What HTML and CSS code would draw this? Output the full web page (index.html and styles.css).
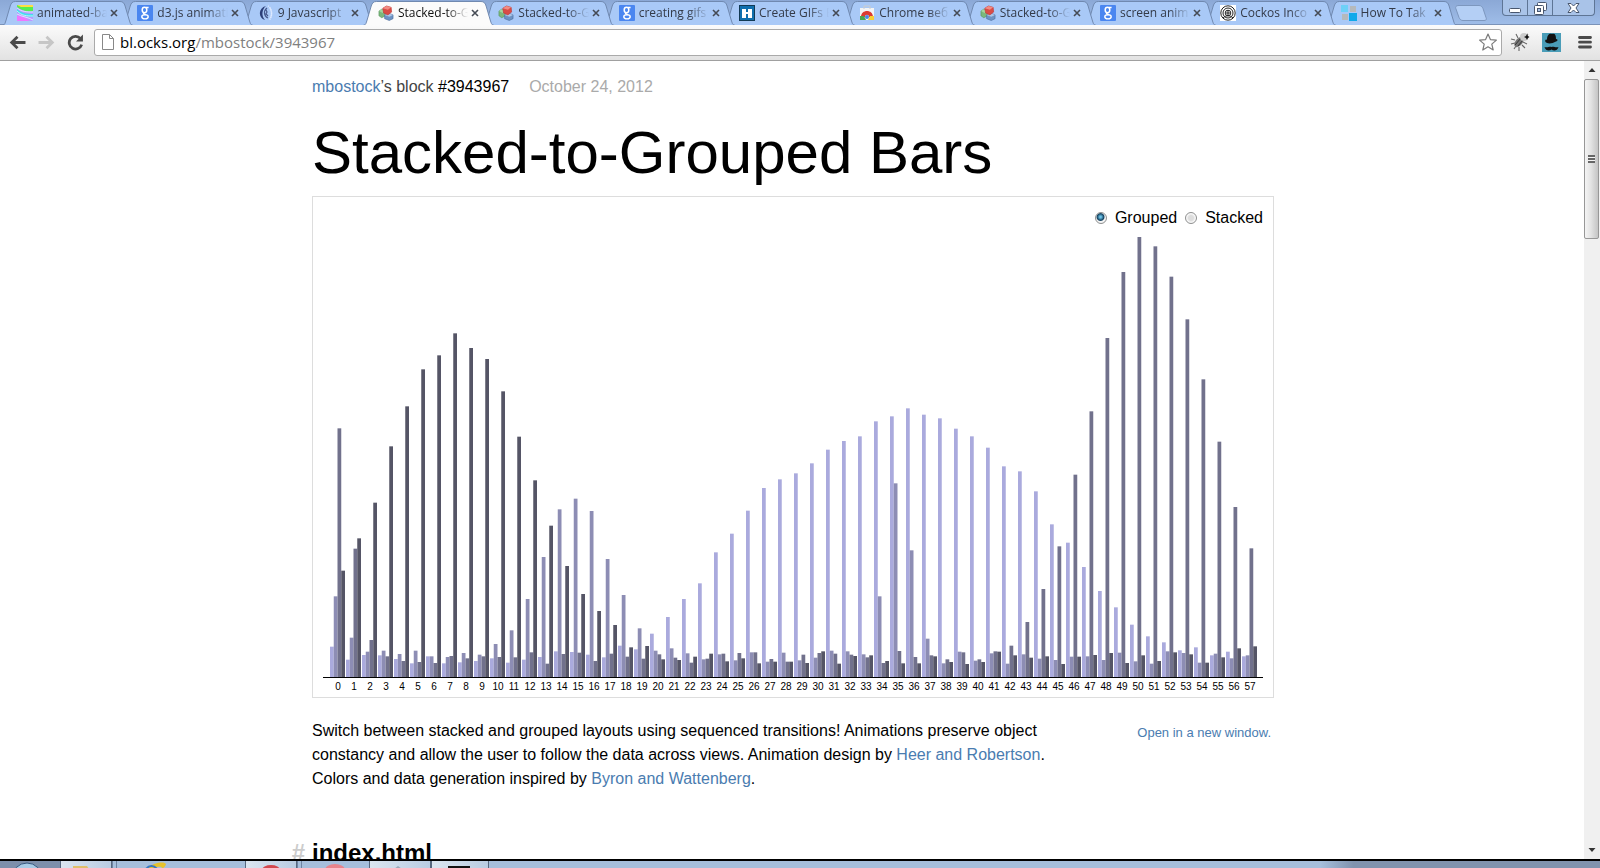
FILE: index.html
```html
<!DOCTYPE html>
<html lang="en">
<head>
<meta charset="utf-8">
<title>Stacked-to-Grouped Bars</title>
<link rel="stylesheet" href="styles.css">
</head>
<body>
<svg class="defs" aria-hidden="true">
  <symbol id="shape" viewBox="0 0 128 24" preserveAspectRatio="none">
    <path d="M0 24.5C3 24 3 22 4 19L8 5C9 2 10 .5 13 .5H115C118 .5 119 2 120 5L124 19C125 22 125 24 128 24.5" vector-effect="non-scaling-stroke"/>
  </symbol>
  <symbol id="rainbow" viewBox="0 0 16 16">
    <path fill="#b9f" d="M0 0h16v16H0z"/><path fill="#5e5" d="M0 0h16v6C9 7 4 5 0 2z"/><path fill="#fd4" d="M0 0h16v2H4z"/><path fill="#4de" d="M0 4c4 4 9 5 16 5v3C8 12 3 9 0 7z"/><path fill="#e7f" d="M0 11c6 0 9 2 12 5H0z"/><path fill="none" stroke="#eff" stroke-width=".7" d="M0 3c5 4 10 4 16 4M0 6c5 5 10 5 16 5M0 9c5 3 11 3 16 6"/>
  </symbol>
  <symbol id="google" viewBox="0 0 16 16">
    <rect width="16" height="16" rx="1" fill="#4a86f0"/><g fill="none" stroke="#fff"><ellipse cx="7.5" cy="5" rx="2.3" ry="2.7" stroke-width="1.5"/><ellipse cx="8" cy="11.8" rx="3.2" ry="2.1" stroke-width="1.4"/><path stroke-width="1.3" d="M9 2.5h2.6M7 7.4c-1.4 1 0 1.400 1.500 2"/></g>
  </symbol>
  <symbol id="swirl" viewBox="0 0 16 16">
    <path fill="#2c3f78" d="M8 1C0 3 0 13 7 15 3 11 4 4 8 1z"/><path fill="none" stroke="#46588c" stroke-width="1.200" d="M9 3C5 6 6 11 10 13M8 5l1 2-1 2 2 2"/><path fill="none" stroke="#dfeaff" stroke-width="1.500" stroke-dasharray="1 1" d="M10 1c4 2 5 11 1 14M12 3c2 3 2 8 0 10"/>
  </symbol>
  <symbol id="cubes" viewBox="0 0 17 16">
    <path fill="#7cb87c" stroke="#4f8f56" stroke-width=".6" d="M1 6l3-2 4 2v5l-4 2-3-2z"/><path fill="#a5d6a0" d="M1 6l3-2 4 2-3 2z"/><path fill="#6d93c4" stroke="#49699a" stroke-width=".6" d="M7 10l4-2 5 2v4l-4 2-5-2z"/><path fill="#abc6e6" d="M7 10l4-2 5 2-4 2z"/><path fill="#d94c46" stroke="#b33" stroke-width=".6" d="M5 3l4-2.500L14 2l.5 5-4 3L6 8z"/><path fill="#f18c83" d="M5 3l4-2.500L14 2l-3.500 2.500z"/>
  </symbol>
  <symbol id="letterh" viewBox="0 0 16 16">
    <path fill="#123a55" d="M0 0h16v16H0z"/><path fill="#0f6fae" d="M1 1h14v14H1z"/><path fill="#fff" d="M3 4h4v3h2V4h4v9H9V9H7v4H3z"/>
  </symbol>
  <symbol id="store" viewBox="0 0 16 16">
    <path fill="#f4f4f4" d="M1 3h14v12H1z"/><path fill="none" stroke="#ccc" d="M5 4V1h6v3"/><path fill="#dc3b32" d="M2 12c0-8 12-8 12 0h-4c0-3-4-3-4 0z"/><path fill="#4aa551" d="M1 11h4l2 4H1z"/><path fill="#f7cf36" d="M11 11h4v4H9z"/><circle cx="8" cy="12" r="2" fill="#4886e8"/>
  </symbol>
  <symbol id="rings" viewBox="0 0 16 16">
    <path fill="#fff" d="M0 0h16v16H0z"/><g fill="none" stroke="#222"><circle cx="8" cy="8" r="7.200"/><circle cx="8" cy="8" r="5"/><circle cx="8" cy="8" r="2.800"/><path d="M8 5v6M6 8h4M3 13c3-3 7-3 10 0"/></g>
  </symbol>
  <symbol id="panes" viewBox="0 0 16 16">
    <path fill="#6dd0f7" d="M0 0h7v7H0z"/><path fill="#b5b9bc" d="M9 1h6v6H9zM1 9h6v6H1z"/><path fill="#10a9ea" d="M8 8h8v8H8z"/>
  </symbol>
  <symbol id="close" viewBox="0 0 12 12"><path d="M3 3l6 6M9 3l-6 6" fill="none" stroke="#454b55" stroke-width="1.600"/></symbol>
</svg>

<header class="browser">
  <div class="tabbar">
    <div class="tabs" id="tabs"></div>
    <button class="newtab" aria-label="New tab"><svg viewBox="0 0 32 16"><path d="M4 .5H24c2 0 3 1 4 3l3 9c1 2 0 3-2 3H8c-2 0-3-1-4-3L1 4C0 2 1 .5 4 .5z" fill="#b4cff5" stroke="#7d97be"/></svg></button>
    <div class="wincontrols">
      <button aria-label="Minimize"><svg viewBox="0 0 24 16"><rect x="6.500" y="8.500" width="11" height="4" rx="1" fill="#fff" stroke="#48566e"/></svg></button>
      <button aria-label="Restore"><svg viewBox="0 0 24 16"><g fill="#fff" stroke="#48566e"><rect x="9.500" y="2.500" width="9" height="8" rx="1"/><rect x="6.500" y="5.500" width="9" height="9" rx="1"/><rect x="9.500" y="8.500" width="3" height="3" fill="#a9c2e6"/></g></svg></button>
      <button class="wide" aria-label="Close window"><svg viewBox="0 0 40 16"><path d="M14.500 3.500h3l2.500 2.500 2.500-2.500h3L22.500 8l3 4.500h-3L20 10l-2.500 2.500h-3l3-4.500z" fill="#fff" stroke="#48566e"/></svg></button>
    </div>
  </div>
  <div class="toolbar">
    <button class="nav" aria-label="Back"><svg viewBox="0 0 16 16"><path d="M8 2.500L2.500 8 8 13.500M3 8h12.500" fill="none" stroke="#4a4a4a" stroke-width="2.600"/></svg></button>
    <button class="nav" aria-label="Forward"><svg viewBox="0 0 16 16"><path d="M8 2.500L13.500 8 8 13.500M13 8H.5" fill="none" stroke="#c6c6c6" stroke-width="2.600"/></svg></button>
    <button class="nav" aria-label="Reload"><svg viewBox="0 0 16 16"><path d="M12.600 4.200A6 6 0 1 0 13.800 10" fill="none" stroke="#4a4a4a" stroke-width="2.600"/><path d="M15 .5V7H8.500z" fill="#4a4a4a"/></svg></button>
    <div class="omnibox">
      <svg class="page" viewBox="0 0 12 16"><path d="M.5.5H7.500l4 4v11H.5zM7.500.5v4h4" fill="#fff" stroke="#888"/></svg>
      <p class="url"><span>bl.ocks.org</span>/mbostock/3943967</p>
      <button class="star" aria-label="Bookmark"><svg viewBox="0 0 18 18"><path d="M9 1l2.400 5.600 6 .500-4.600 4 1.400 5.900L9 13.800 3.800 17l1.400-5.900L.6 7.100l6-.5z" fill="#fff" stroke="#7b7b7b" stroke-width="1.200" stroke-linejoin="round"/></svg></button>
    </div>
    <button class="ext" aria-label="Bug extension"><svg viewBox="0 0 20 20"><g fill="none" stroke="#666" stroke-width="1.100"><path d="M5 8L1 7M5 11l-4 1M6 14l-2 3M9 15v4M8 6L6 2M12 13l3 3M13 10l4 2M14 5l4-3"/></g><ellipse cx="9" cy="10" rx="6" ry="3.500" transform="rotate(-50 9 10)" fill="#777"/><path d="M5 13l6-7M8 14l5-6" stroke="#333"/><circle cx="14" cy="5" r="4" fill="#ccc"/><path d="M17 2l1 2 1.500 1L18 6l-1 2-1-2-2-1 2-1z" fill="#111"/></svg></button>
    <button class="ext" aria-label="Hat extension"><svg viewBox="0 0 20 20"><path fill="#4a9db8" d="M0 1h19v19H0z"/><path fill="#111" d="M5 8c0-6 3-7 5-6 3-1 4 1 4 5 2 0 2 2 0 2.500C10 12 5 12 3.500 10 2.500 8 4 7 5 8zM9.500 15c2-1 4 1 7 0-1 4-5 4-7 2.500C7.500 19 3.500 19 2.500 15c3 1 5-1 7 0z"/></svg></button>
    <button class="ext menu" aria-label="Menu"><svg viewBox="0 0 14 14"><path d="M1.500 2.500h11M1.500 7.200h11M1.500 12h11" stroke="#4a4a4a" stroke-width="2.800" stroke-linecap="round"/></svg></button>
  </div>
</header>

<div class="viewport">
  <main class="scroller">
    <article class="block">
      <p class="byline"><span><a href="#">mbostock</a>’s block <a class="id" href="#">#3943967</a></span><time datetime="2012-10-24">October 24, 2012</time></p>
      <h1>Stacked-to-Grouped Bars</h1>
      <figure class="chart">
        <form class="modes">
          <label><input type="radio" name="mode" value="grouped" checked>Grouped</label>
          <label><input type="radio" name="mode" value="stacked">Stacked</label>
        </form>
        <svg id="chart" viewBox="0 0 960 500" role="img" aria-label="Grouped bar chart of four layers"></svg>
      </figure>
      <div class="about">
        <p>Switch between stacked and grouped layouts using sequenced transitions! Animations preserve object constancy and allow the user to follow the data across views. Animation design by <a href="#">Heer and Robertson</a>. Colors and data generation inspired by <a href="#">Byron and Wattenberg</a>.</p>
        <a class="open" href="#">Open in a new window.</a>
      </div>
      <h2><a class="anchor" href="#index">#</a>index.html</h2>
    </article>
  </main>
  <div class="scrollbar">
    <svg class="arrow" viewBox="0 0 16 18"><path d="M4.500 11L8 7l3.500 4z" fill="#333"/></svg>
    <div class="thumb"><i></i></div>
    <svg class="arrow" viewBox="0 0 16 18"><path d="M4.500 7L8 11l3.500-4z" fill="#333"/></svg>
  </div>
</div>

<footer class="taskbar">
  <svg class="orb" viewBox="0 0 60 8"><circle cx="27" cy="17" r="15" fill="#a9cbe6" stroke="#35577d"/></svg>
  <div class="task lit"><svg viewBox="0 0 50 8"><path d="M12 8V5h14l2 3z" fill="#e0bf6a"/></svg></div>
  <i class="sep"></i><i class="sep"></i>
  <div class="task ie"><svg viewBox="0 0 128 8"><path d="M27 8c6-7 18-8 19-5 0 2-3 4-4 5 1-3-5-3-10 0z" fill="#e6c22c"/><path d="M26 8c3-4 8-4 11 0" fill="none" stroke="#3577c4" stroke-width="2"/></svg></div>
  <div class="task lit"><svg viewBox="0 0 50 8"><ellipse cx="25" cy="9" rx="9" ry="5" fill="#d2474d"/></svg></div>
  <i class="sep"></i><i class="sep"></i>
  <div class="task opera"><svg viewBox="0 0 66 8"><ellipse cx="30" cy="9" rx="10" ry="6" fill="#e8848c"/></svg></div>
  <div class="task lit"><svg viewBox="0 0 60 8"><path d="M24 8l4-3 4 3z" fill="#98a8b8"/></svg></div>
  <div class="task lit"><svg viewBox="0 0 56 8"><path d="M16 5h22v3H16z" fill="#111"/></svg></div>
  <div class="tray"></div>
</footer>
<script src="script.js"></script>
</body>
</html>
```
FILE: styles.css
```css
* { box-sizing: border-box; }
body {
  margin: 0;
  height: 100vh;
  display: flex;
  flex-direction: column;
  overflow: hidden;
  background: #fff;
  color: #000;
  font: 16px/24px "Liberation Sans", Arial, sans-serif;
}
svg { display: block; }
p, h1, h2, figure { margin: 0; }
a { color: #4a7cb0; text-decoration: none; }
button { padding: 0; border: 0; background: none; font: inherit; }
.defs { position: absolute; width: 0; height: 0; }

/* Browser frame */
.browser { flex: none; font-family: "Open Sans", "Noto Sans", sans-serif; }
.tabbar {
  display: flex;
  height: 25px;
  padding: 1px 5px 0;
  background: linear-gradient(#8ba8d6, #9fbde8);
  border-bottom: 1px solid #7b93b8;
}
.tabs { display: flex; flex: 0 1 1444px; min-width: 0; }
.tab {
  position: relative;
  flex: 1 1 0;
  min-width: 0;
  display: flex;
  align-items: center;
  height: 24px;
  padding-left: 12px;
  font-size: 12px;
  line-height: 20px;
  color: #333a48;
}
.tab .shape {
  position: absolute;
  left: -3px;
  top: 0;
  width: calc(100% + 11px);
  height: 24px;
  fill: #a9c9f7;
  stroke: #7089b0;
}
.tab.active { z-index: 20; color: #111; }
.tab.active .shape { fill: #fbfbfb; }
.tab .icon { position: relative; flex: none; width: 16px; height: 16px; }
.tab .title {
  position: relative;
  flex: 1 1 auto;
  min-width: 0;
  margin: 0 1px 0 4px;
  overflow: hidden;
  white-space: nowrap;
  -webkit-mask-image: linear-gradient(90deg, #000 70%, transparent);
  mask-image: linear-gradient(90deg, #000 70%, transparent);
}
.tab button { position: relative; flex: none; width: 12px; height: 12px; margin-right: 5px; }
.newtab { width: 32px; height: 16px; margin: 4px auto 0 6px; }
.wincontrols {
  display: flex;
  height: 16px;
  margin-top: -1px;
  border: 1px solid #5e7595;
  border-top: 0;
  border-radius: 0 0 4px 4px;
  background: #a9c3e8;
}
.wincontrols button { width: 25px; height: 15px; border-right: 1px solid #5e7595; }
.wincontrols .wide { width: 41px; border-right: 0; }
.wincontrols svg { width: 100%; height: 16px; }
.toolbar {
  display: flex;
  align-items: center;
  height: 36px;
  padding: 0 8px 1px 9px;
  background: linear-gradient(#fbfbfb, #e2e2e2);
  border-bottom: 1px solid #a0a0a0;
}
.nav { width: 17px; height: 17px; margin-right: 12px; }
.nav + .nav + .nav { margin-right: 10px; }
.omnibox {
  flex: 1;
  display: flex;
  align-items: center;
  height: 27px;
  margin-right: 8px;
  padding: 0 4px 0 7px;
  border: 1px solid #aaa;
  border-radius: 3px;
  background: #fff;
}
.omnibox .page { width: 12px; height: 16px; }
.url { flex: 1; margin-left: 6px; font-size: 15px; line-height: 24px; color: #808080; }
.url span { color: #000; }
.star { width: 18px; height: 18px; }
.ext { width: 20px; height: 20px; margin-right: 12px; }
.ext.menu { width: 14px; height: 14px; margin: 0 0 0 4px; }

/* Page */
.viewport { flex: 1; min-height: 0; display: flex; }
.scroller { flex: 1; min-width: 0; overflow: hidden; }
.block { max-width: 960px; margin: 0 auto; padding-top: 14px; }
.byline { display: flex; gap: 20px; color: #444; }
.byline .id { color: #000; }
.byline time { color: #aaa; }
h1 { margin-top: 18px; font-size: 60px; font-weight: 400; line-height: 72px; }
.chart { position: relative; margin: 7px -2px 21px 0; border: 1px solid #ddd; }
.chart svg { width: 100%; height: auto; }
.modes { position: absolute; top: 9px; right: 10px; display: flex; gap: 8px; }
.modes label { display: flex; align-items: center; gap: 8px; }
.modes input {
  appearance: none;
  width: 12px;
  height: 12px;
  margin: 0;
  border: 1px solid #8e8f8f;
  border-radius: 50%;
  background: radial-gradient(#ddd 35%, #f8f8f8 60%);
}
.modes input:checked { background: radial-gradient(circle at 45% 40%, #6cc3e8 0 10%, #12405f 42%, #f4f4f4 55%); }
.axis-label { font-size: 10px; text-anchor: middle; }
.about { display: flex; justify-content: space-between; align-items: flex-start; }
.about p { flex: 0 1 740px; }
.open { margin-right: 1px; padding-top: 2px; font-size: 13px; }
h2 { position: relative; margin-top: 46px; font-size: 24px; line-height: 32px; }
.anchor { position: absolute; right: 100%; margin-right: 7px; color: #ccc; }

.scrollbar {
  flex: none;
  display: flex;
  flex-direction: column;
  width: 16px;
  background: #f0f0f0;
}
.arrow { flex: none; width: 16px; height: 18px; }
.thumb {
  display: grid;
  place-items: center;
  width: 15px;
  height: 20%;
  margin-bottom: auto;
  border: 1px solid #979797;
  border-radius: 2px;
  background: linear-gradient(90deg, #f4f4f4, #e3e3e3 45%, #c4c4c4);
}
.thumb i { width: 7px; height: 8px; background: repeating-linear-gradient(#666 0 2px, #f4f4f4 2px 3px); }

/* Task bar */
.taskbar {
  flex: none;
  display: flex;
  height: 9px;
  overflow: hidden;
  border-top: 2px solid #000;
  background: #a6bfdc;
}
.taskbar svg { height: 8px; }
.orb { flex: none; width: 60px; background: #7d8fab; }
.task { flex: none; }
.task.lit { border: 1px solid #56677e; border-width: 0 1px; background: linear-gradient(90deg, #dbe5f0, #b9cce2); }
.sep { flex: none; width: 4px; border-left: 1px solid #6e84a2; }
.ie { width: 125px; }
.opera { width: 64px; }
.tray { flex: 0 1 280px; margin-left: auto; background: linear-gradient(90deg, #a6bfdc, #8093ae 12%); }
```
FILE: script.js
```js
const tabs = [
  ["rainbow", "animated-ba"], ["google", "d3.js animati"], ["swirl", "9 Javascript"],
  ["cubes", "Stacked-to-G"], ["cubes", "Stacked-to-G"], ["google", "creating gifs"],
  ["letterh", "Create GIFs E"], ["store", "Chrome веб"], ["cubes", "Stacked-to-G"],
  ["google", "screen anim"], ["rings", "Cockos Inco"], ["panes", "How To Tak"]
];
document.getElementById("tabs").innerHTML = tabs.map(([icon, title], i) => `
  <div class="tab${i === 3 ? " active" : ""}" style="z-index:${i === 3 ? 20 : 12 - i}">
    <svg class="shape"><use href="#shape"/></svg>
    <svg class="icon"><use href="#${icon}"/></svg>
    <span class="title">${title}</span>
    <button aria-label="Close tab"><svg width="12" height="12"><use href="#close"/></svg></button>
  </div>`).join("");

// Bar heights in thirds of a unit, one row per group
const groups = [
  [91,242,746,319],[52,118,385,416],[66,76,111,523],[65,79,62,692],[54,69,48,812],
  [41,79,45,923],[62,62,42,965],[41,60,63,1031],[44,72,56,987],[48,67,62,954],
  [56,99,60,857],[43,140,59,721],[52,234,74,590],[60,360,40,454],[77,503,69,333],
  [75,535,73,249],[67,498,48,198],[59,354,70,156],[94,246,61,89],[83,146,55,93],
  [130,79,68,53],[180,86,58,51],[234,71,43,61],[281,53,55,70],[374,68,70,47],
  [430,50,72,56],[499,74,74,41],[567,46,54,46],[593,73,46,46],[611,50,67,42],
  [641,58,72,77],[682,79,70,40],[708,77,67,63],[722,68,59,65],[767,242,42,48],
  [782,581,78,41],[806,380,60,41],[787,115,65,62],[776,41,53,45],[745,76,74,39],
  [722,49,53,45],[688,71,77,76],[632,40,94,65],[617,68,165,58],[557,55,264,62],
  [458,51,392,39],[403,61,607,61],[330,62,797,66],[258,51,1017,72],[209,73,1215,42],
  [157,47,1320,65],[122,40,1292,48],[104,77,1201,74],[80,72,1073,68],[89,43,893,43],
  [65,70,706,59],[76,56,510,86],[62,65,386,92]
];
const colors = ["#aaaadd", "#8d8db4", "#71718c", "#555566"];
const base = 480, left = 17, step = 16, barWidth = 15 / 4;
let out = "";
groups.forEach((group, i) => {
  group.forEach((value, layer) => {
    const h = value / 3;
    out += `<rect x="${left + i * step + layer * barWidth}" y="${base - h}" width="${barWidth}" height="${h}" fill="${colors[layer]}"/>`;
  });
  out += `<text class="axis-label" x="${left + i * step + 8}" y="493">${i}</text>`;
});
out += `<path d="M10 480.5H950" stroke="#000"/>`;
document.getElementById("chart").innerHTML = out;
```
